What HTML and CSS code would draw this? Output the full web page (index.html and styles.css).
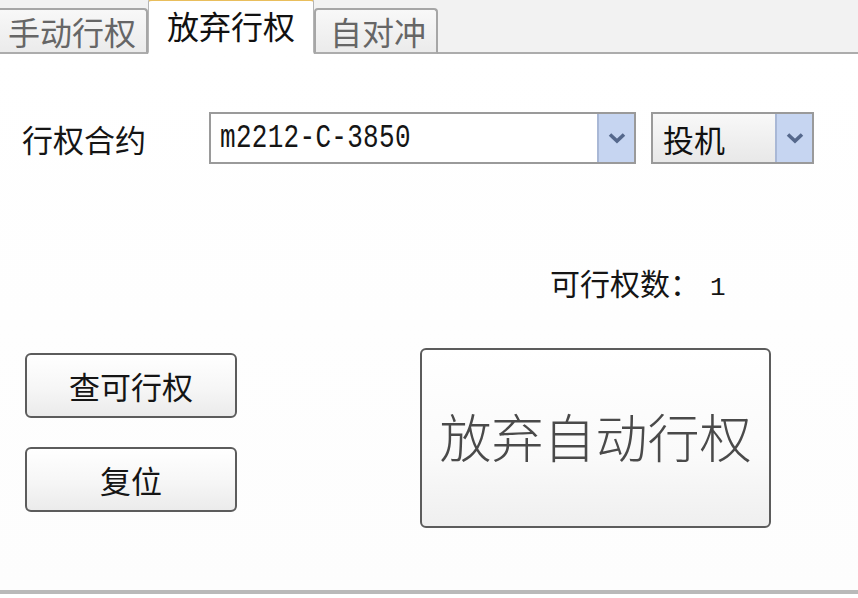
FILE: index.html
```html
<!DOCTYPE html>
<html lang="zh-CN">
<head>
  <meta charset="UTF-8" />
  <title>放弃行权</title>
  <link rel="stylesheet" href="styles.css">
</head>
<body>
  <div class="tabs">
    <div class="tab tab-first">手动行权</div>
    <div class="tab tab-active">放弃行权</div>
    <div class="tab tab-last">自对冲</div>
  </div>

  <div class="panel">
    <div class="contract-row">
      <div class="field-label">行权合约</div>
      <div class="combo combo-contract">
        <div class="combo-text"><span class="mono">m2212-C-3850</span></div>
        <div class="combo-arrow">
          <svg width="18" height="12" viewBox="0 0 18 12"><path d="M2 2.5 L9 9 L16 2.5" fill="none" stroke="#55688c" stroke-width="3.6"/></svg>
        </div>
      </div>
      <div class="combo combo-type">
        <div class="combo-text combo-text-grey">投机</div>
        <div class="combo-arrow">
          <svg width="18" height="12" viewBox="0 0 18 12"><path d="M2 2.5 L9 9 L16 2.5" fill="none" stroke="#55688c" stroke-width="3.6"/></svg>
        </div>
      </div>
    </div>

    <div class="count-row">可行权数：<span class="count-num">1</span></div>

    <div class="action-row">
      <div class="side-buttons">
        <button class="btn">查可行权</button>
        <button class="btn">复位</button>
      </div>
      <button class="btn btn-big">放弃自动行权</button>
    </div>
  </div>
</body>
</html>
```

FILE: styles.css
```css
* {
  margin: 0;
  padding: 0;
  box-sizing: border-box;
}

body {
  width: 858px;
  height: 598px;
  overflow: hidden;
  background: #ffffff;
  font-family: "Noto Sans CJK SC", "Noto Sans", sans-serif;
  color: #1a1a1a;
}

/* Tab strip */
.tabs {
  height: 54px;
  display: flex;
  align-items: flex-end;
  background: #f2f2f2;
  border-bottom: 2px solid #acacac;
}

.tab {
  flex-shrink: 0;
  white-space: nowrap;
  height: 46px;
  margin-bottom: -2px;
  display: flex;
  align-items: center;
  font-size: 32px;
  line-height: 1;
  color: #666;
  background: linear-gradient(#f8f8f8, #ebebeb);
  border: 2px solid #a6a6a6;
  border-bottom: 2px solid #acacac;
  border-radius: 4px 4px 0 0;
}

.tab-first {
  margin-left: -6px;
  padding: 0 10px 0 12px;
}

.tab-active {
  height: 56px;
  padding: 8px 18px 0 18px;
  align-items: flex-start;
  color: #111;
  background: #ffffff;
  border-left: 1px solid #b5b5b5;
  border-right: 1px solid #b5b5b5;
  border-top: 3px solid #e9be5c;
  border-bottom: 2px solid #ffffff;
}

.tab-last {
  padding: 0 10px 0 14px;
}

/* Panel */
.panel {
  height: 540px;
  padding: 58px 0 0 22px;
  border-bottom: 4px solid #b9b9b9;
  background: linear-gradient(#ffffff, #fdfdfd);
}

.contract-row {
  display: flex;
  align-items: center;
  height: 52px;
}

.field-label {
  width: 187px;
  font-size: 31px;
  line-height: 1;
  color: #151515;
}

.combo {
  height: 52px;
  display: flex;
  border: 2px solid #9a9a9a;
  background: #ffffff;
}

.combo-contract {
  width: 427px;
}

.combo-type {
  width: 163px;
  margin-left: 15px;
}

.combo-text {
  flex: 1;
  display: flex;
  align-items: center;
  padding-left: 9px;
  font-size: 31px;
  color: #111;
}

.combo-text-grey {
  padding-left: 10px;
  background: linear-gradient(#f8f8f8, #e8e8e8);
}

.mono {
  display: inline-block;
  font-family: "Liberation Mono", monospace;
  font-size: 26px;
  letter-spacing: 0.3px;
  transform: scaleY(1.3);
  color: #151515;
}

.combo-arrow {
  width: 37px;
  display: flex;
  align-items: center;
  justify-content: center;
  background: #c6d5f1;
  border-left: 2px solid #a9b8d6;
}

.count-row {
  margin-top: 101px;
  padding-left: 528px;
  height: 34px;
  font-size: 30px;
  line-height: 34px;
  color: #151515;
}

.count-num {
  font-family: "Liberation Mono", monospace;
  font-size: 26px;
  margin-left: 10px;
}

/* Buttons */
.action-row {
  display: flex;
  margin-top: 49px;
}

.side-buttons {
  display: flex;
  flex-direction: column;
  gap: 29px;
  margin-top: 5px;
  margin-left: 3px;
}

.btn {
  font-family: "Noto Sans CJK SC", "Noto Sans", sans-serif;
  width: 212px;
  height: 65px;
  font-size: 31px;
  line-height: 1;
  color: #151515;
  background: linear-gradient(#ffffff, #f6f6f6 55%, #ebebeb);
  border: 2px solid #5c5c5c;
  border-radius: 6px;
}

.btn-big {
  width: 351px;
  height: 180px;
  margin-left: 183px;
  font-size: 52px;
  font-weight: 300;
  color: #4a4a4a;
  padding-bottom: 4px;
  background: linear-gradient(#ffffff, #fafafa 60%, #efefef);
}
```
